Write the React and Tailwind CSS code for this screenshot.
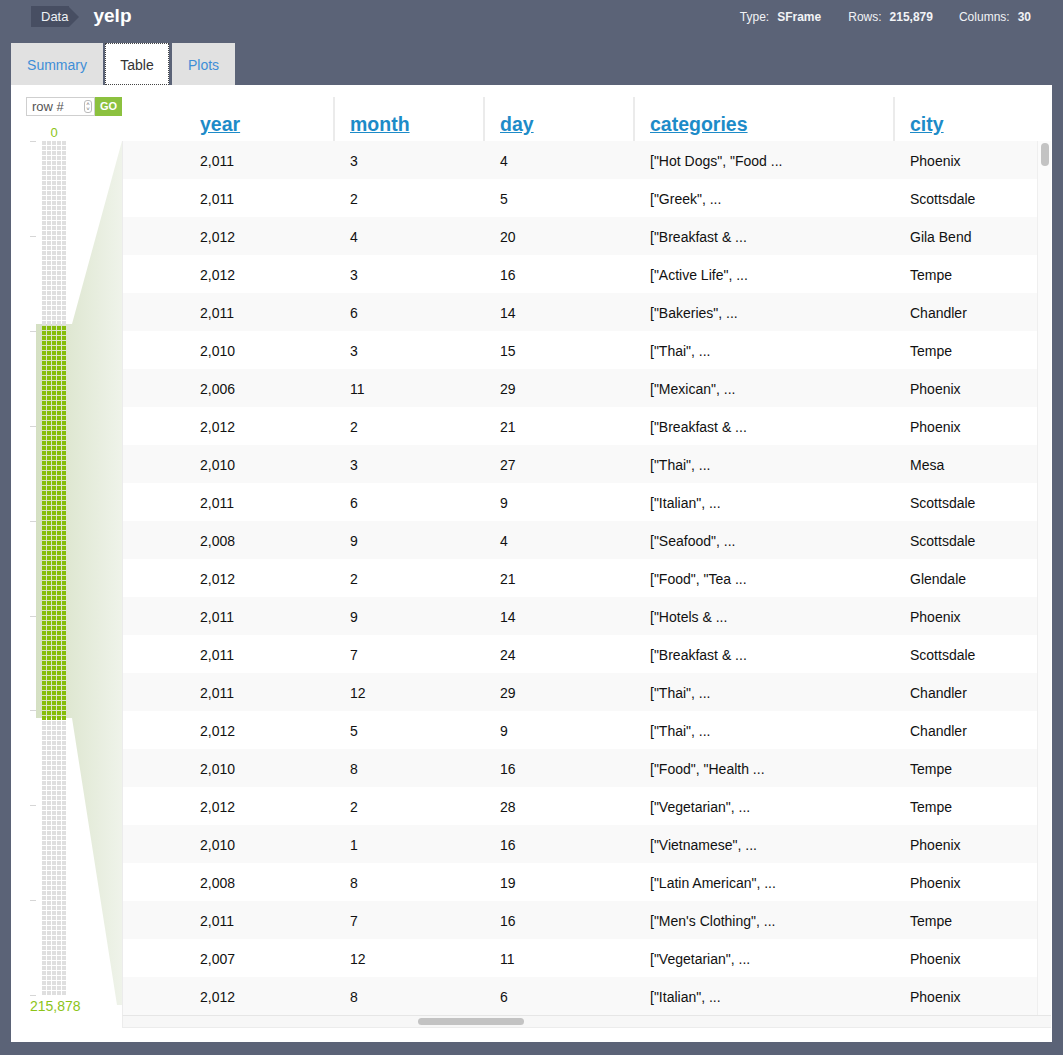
import React from "react";

const rows = [
    ["2,011", "3", "4", '["Hot Dogs", "Food ...', "Phoenix"],
    ["2,011", "2", "5", '["Greek", ...', "Scottsdale"],
    ["2,012", "4", "20", '["Breakfast & ...', "Gila Bend"],
    ["2,012", "3", "16", '["Active Life", ...', "Tempe"],
    ["2,011", "6", "14", '["Bakeries", ...', "Chandler"],
    ["2,010", "3", "15", '["Thai", ...', "Tempe"],
    ["2,006", "11", "29", '["Mexican", ...', "Phoenix"],
    ["2,012", "2", "21", '["Breakfast & ...', "Phoenix"],
    ["2,010", "3", "27", '["Thai", ...', "Mesa"],
    ["2,011", "6", "9", '["Italian", ...', "Scottsdale"],
    ["2,008", "9", "4", '["Seafood", ...', "Scottsdale"],
    ["2,012", "2", "21", '["Food", "Tea ...', "Glendale"],
    ["2,011", "9", "14", '["Hotels & ...', "Phoenix"],
    ["2,011", "7", "24", '["Breakfast & ...', "Scottsdale"],
    ["2,011", "12", "29", '["Thai", ...', "Chandler"],
    ["2,012", "5", "9", '["Thai", ...', "Chandler"],
    ["2,010", "8", "16", '["Food", "Health ...', "Tempe"],
    ["2,012", "2", "28", '["Vegetarian", ...', "Tempe"],
    ["2,010", "1", "16", '["Vietnamese", ...', "Phoenix"],
    ["2,008", "8", "19", '["Latin American", ...', "Phoenix"],
    ["2,011", "7", "16", '["Men\'s Clothing", ...', "Tempe"],
    ["2,007", "12", "11", '["Vegetarian", ...', "Phoenix"],
    ["2,012", "8", "6", '["Italian", ...', "Phoenix"],
];

const columns = [
    { name: "year", w: "w-[211px] pl-[78px]" },
    { name: "month", w: "w-[150px] pl-[15px] border-l-2 border-[#ebebeb]" },
    { name: "day", w: "w-[150px] pl-[15px] border-l-2 border-[#ebebeb]" },
    { name: "categories", w: "w-[260px] pl-[15px] border-l-2 border-[#ebebeb]" },
    { name: "city", w: "w-[144px] pl-[15px] border-l-2 border-[#ebebeb]" },
];

const cellW = ["w-[211px] pl-[77px]", "w-[150px] pl-[16px]", "w-[150px] pl-[16px]", "w-[260px] pl-[16px]", "w-[144px] pl-[16px]"];

const Minimap = () => {
    const cells = [];
    const nRows = 171;
    for (let r = 0; r < nRows; r++) {
        const y = 141 + r * 5;
        const on = y >= 324 && y < 718;
        for (let c = 0; c < 5; c++) {
            cells.push(
                <rect key={r + "-" + c} x={42 + c * 5} y={y} width="4" height="4" fill={on ? "#86bd0a" : "#dfdfdf"} />
            );
        }
    }
    const ticks = [];
    for (let i = 0; i < 10; i++) {
        const y = Math.round(141 + i * 94.9);
        ticks.push(<rect key={i} x="30" y={y} width="6" height="1" fill="#d6d6d6" />);
    }
    return (
        <svg className="absolute left-0 top-0" width="111" height="957" viewBox="11 85 111 957">
            <defs>
                <linearGradient id="shade" x1="36" y1="0" x2="122" y2="0" gradientUnits="userSpaceOnUse">
                    <stop offset="0" stopColor="#d5e0c3" />
                    <stop offset="1" stopColor="#eff3ea" />
                </linearGradient>
            </defs>
            <polygon points="122,141 122,1005 117,1005 72,718 36,718 36,324 72,324" fill="url(#shade)" />
            {ticks}
            {cells}
        </svg>
    );
};

export default function App() {
    return (
        <div className="w-[1063px] h-[1055px] bg-[#5b6377] font-['Liberation_Sans',Arial,sans-serif] flex flex-col">
            {/* top bar */}
            <div className="h-[43px] flex items-start pt-[6px] pl-[31px] pr-[32px]">
                <div className="flex items-center">
                    <div className="h-[21px] bg-[#474e62] text-[#eef0f4] text-[13px] flex items-center pl-[10px] pr-[1px]">Data</div>
                    <div className="w-0 h-0 border-y-[10.5px] border-y-transparent border-l-[10px] border-l-[#474e62]" />
                    <div className="ml-[14px] text-white font-bold text-[19px] leading-[21px] -mt-[3px]">yelp</div>
                </div>
                <div className="ml-auto flex items-center text-[12px] text-[#f2f3f6] mt-[2px]">
                    <span>Type:</span>
                    <span className="font-bold ml-[8px]">SFrame</span>
                    <span className="ml-[27px]">Rows:</span>
                    <span className="font-bold ml-[8px]">215,879</span>
                    <span className="ml-[26px]">Columns:</span>
                    <span className="font-bold ml-[8px]">30</span>
                </div>
            </div>

            {/* tabs */}
            <div className="h-[42px] flex pl-[11px] gap-[2px]">
                <div className="w-[92px] bg-[#e1e1e1] text-[#3e8ed7] text-[14px] flex items-center justify-center pt-[2px]">Summary</div>
                <div className="w-[64px] bg-white text-[#333] text-[14px] flex items-center justify-center border border-dotted border-[#444] pt-[2px]">Table</div>
                <div className="w-[63px] ml-[1px] bg-[#e1e1e1] text-[#3e8ed7] text-[14px] flex items-center justify-center pt-[2px]">Plots</div>
            </div>

            {/* panel */}
            <div className="ml-[11px] w-[1041px] h-[957px] bg-white flex">
                <div className="relative w-[111px] shrink-0">
                    <Minimap />
                    <div className="relative pt-[12px] pl-[15px] flex">
                        <div className="w-[69px] h-[19px] border border-[#cfcfcf] flex items-center pl-[5px] pr-[2px] text-[13px] text-[#555]">
                            <span>row #</span>
                            <span className="ml-auto w-[8px] h-[13px] border border-[#bbb] rounded-[3px] flex flex-col items-center justify-center text-[6px] leading-[5px] text-[#666]">
                                <span>˄</span>
                                <span>˅</span>
                            </span>
                        </div>
                        <div className="w-[27px] h-[19px] bg-[#8cc13f] text-white font-bold text-[11px] flex items-center justify-center">GO</div>
                    </div>
                    <div className="relative text-center w-[86px] text-[13px] text-[#8cc418] mt-[9px] leading-[15px]">0</div>
                    <div className="absolute left-[19px] top-[911px] text-[14px] text-[#8cc418]">215,878</div>
                </div>

                <div className="flex flex-col pt-[12px] w-[930px]">
                    {/* header */}
                    <div className="h-[44px] flex bg-white">
                        {columns.map((c) => (
                            <div key={c.name} className={"shrink-0 flex items-end pb-[5px] " + c.w}>
                                <span className="text-[19.5px] leading-[24px] font-bold underline text-[#1d8bc8]">{c.name}</span>
                            </div>
                        ))}
                    </div>
                    {/* body */}
                    <div className="flex border-l border-[#ececec] w-[929px]">
                        <div className="w-[915px] overflow-hidden">
                            {rows.map((r, i) => (
                                <div key={i} className={"h-[38px] flex items-center pt-[2px] text-[14px] text-[#111] " + (i % 2 === 0 ? "bg-[#f9f9f9]" : "bg-white")}>
                                    {r.map((v, j) => (
                                        <div key={j} className={"shrink-0 whitespace-nowrap " + cellW[j]}>{v}</div>
                                    ))}
                                </div>
                            ))}
                        </div>
                        <div className="w-[14px] bg-[#fbfbfb] border-l border-[#efefef] pt-[2px] flex justify-center">
                            <div className="w-[8px] h-[23px] rounded-full bg-[#c3c3c3]" />
                        </div>
                    </div>
                    <div className="h-[13px] w-[929px] bg-[#f7f7f7] border-t border-[#e6e6e6] border-l border-l-[#ececec] border-b border-b-[#ececec] flex items-center">
                        <div className="ml-[295px] w-[106px] h-[7px] rounded-full bg-[#c3c3c3]" />
                    </div>
                </div>
            </div>
        </div>
    );
}
